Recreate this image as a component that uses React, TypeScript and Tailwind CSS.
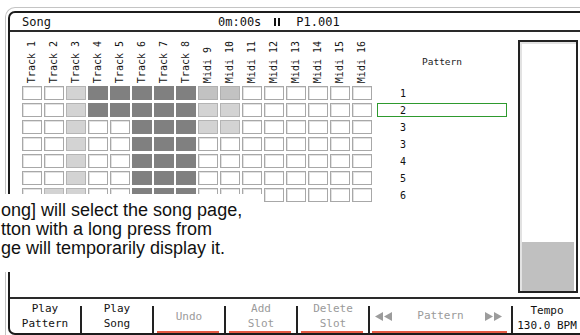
const tracks = [
  "Track 1", "Track 2", "Track 3", "Track 4", "Track 5", "Track 6", "Track 7", "Track 8",
  "Midi 9", "Midi 10", "Midi 11", "Midi 12", "Midi 13", "Midi 14", "Midi 15", "Midi 16",
]

// . empty, L light, M mid, D dark
const grid = [
  "..LDDDDDMM......",
  "..LDDDDDLL......",
  "..L..DDDLL......",
  "..L..DDD........",
  "..L..DDD........",
  "..L..DDD........",
  ".LL..DDD........",
]

const patterns = ["1", "2", "3", "3", "4", "5", "6"]

const mono = { fontFamily: '"DejaVu Sans Mono", monospace' }

function Cell({ kind }: { kind: string }) {
  if (kind === "D") return <div className="w-[20px] h-[14px] bg-[#808080]" />
  if (kind === "L") return <div className="w-[20px] h-[14px] bg-[#d3d3d3] border border-[#b4b4b4]" />
  if (kind === "M") return <div className="w-[20px] h-[14px] bg-[#c2c2c2] border border-[#b0b0b0]" />
  return <div className="w-[20px] h-[14px] bg-white border border-[#a8a8a8] shadow-[inset_1px_1px_0_#e2e2e2]" />
}

function Btn({ top, bottom, off, line, w }: { top?: string; bottom?: string; off?: boolean; line?: boolean; w: string }) {
  return (
    <div className={`${w} relative flex flex-col items-center justify-center leading-[15px] text-[11px] ${off ? "text-[#9a9a9a]" : "text-[#111]"}`}>
      {top && <span>{top}</span>}
      {bottom && <span>{bottom}</span>}
      {line && <div className="absolute left-[3px] right-[5px] bottom-0 h-[2px] bg-[#e35a43]" />}
    </div>
  )
}

function Sep() {
  return <div className="w-[2px] h-[27px] self-end bg-[#222]" />
}

function Arrows({ dir }: { dir: "l" | "r" }) {
  const pts = dir === "l" ? ["8,0 8,9 0,4.5", "17,0 17,9 9,4.5"] : ["0,0 0,9 8,4.5", "9,0 9,9 17,4.5"]
  return (
    <svg width="17" height="9" viewBox="0 0 17 9">
      {pts.map((p) => (
        <polygon key={p} points={p} fill="#9c9c9c" />
      ))}
    </svg>
  )
}

export default function App() {
  return (
    <div className="relative w-[580px] h-[335px] bg-white overflow-hidden" style={mono}>
      <div className="ml-[5px] mt-[7px] w-[620px] h-[340px] border-l border-t border-[#c4c4c4] rounded-tl-[10px] pl-[2px] pt-[3px]">
        <div className="w-[610px] h-[324px] border-2 border-[#1c1c1c] rounded-[7px] flex flex-col">
          {/* title bar */}
          <div className="h-[19px] border-b-2 border-[#2a2a2a] flex items-center pl-[12px] text-[12px] text-[#111]">
            <span className="w-[196px]">Song</span>
            <span>0m:00s</span>
            <span className="ml-[13px] flex gap-[2px]">
              <span className="w-[2px] h-[8px] bg-[#111]" />
              <span className="w-[2px] h-[8px] bg-[#111]" />
            </span>
            <span className="ml-[16px]">P1.001</span>
          </div>

          {/* body */}
          <div className="h-[265px] flex">
            <div className="pl-[12px] flex flex-col gap-[3px]">
              <div className="h-[51px] flex gap-[2px] items-end">
                {tracks.map((t) => (
                  <div key={t} className="w-[20px] flex justify-center">
                    <span className="[writing-mode:vertical-rl] rotate-180 text-[10px] leading-[10px] text-[#111]">{t}</span>
                  </div>
                ))}
              </div>
              {grid.map((r, i) => (
                <div key={i} className="flex gap-[2px]">
                  {r.split("").map((k, j) => (
                    <Cell key={j} kind={k} />
                  ))}
                </div>
              ))}
            </div>

            <div className="ml-[5px] w-[130px] flex flex-col gap-[3px]">
              <div className="h-[51px] pt-[9px] flex items-center justify-center text-[9.5px] text-[#222]">Pattern</div>
              {patterns.map((p, i) => (
                <div
                  key={i}
                  className={`h-[14px] pl-[22px] flex items-center text-[10px] text-[#111] border ${i === 1 ? "border-[#2e9a2e]" : "border-transparent"}`}
                >
                  {p}
                </div>
              ))}
            </div>

            <div className="ml-[11px] mt-[8px] w-[60px] h-[253px] border-2 border-[#222] flex flex-col">
              <div className="flex-1 border-l-2 border-t-2 border-[#e2e2e2] flex flex-col justify-end pr-[2px]">
                <div className="h-[49px] bg-[#c0c0c0]" />
              </div>
            </div>
          </div>

          {/* bottom bar */}
          <div className="flex-1 border-t-2 border-[#2a2a2a] flex">
            <Btn w="w-[70px]" top="Play" bottom="Pattern" />
            <Sep />
            <Btn w="w-[70px]" top="Play" bottom="Song" />
            <Sep />
            <Btn w="w-[70px]" top="Undo" off line />
            <Sep />
            <Btn w="w-[70px]" top="Add" bottom="Slot" off line />
            <Sep />
            <Btn w="w-[70px]" top="Delete" bottom="Slot" off line />
            <Sep />
            <div className="w-[141px] relative flex items-center justify-between pl-[5px] pr-[9px] text-[11px] text-[#9a9a9a]">
              <Arrows dir="l" />
              <span className="ml-[4px]">Pattern</span>
              <Arrows dir="r" />
              <div className="absolute left-[2px] right-[4px] bottom-0 h-[2px] bg-[#e35a43]" />
            </div>
            <Sep />
            <div className="w-[68px] flex flex-col items-center justify-center pt-[3px] leading-[15px] text-[11px] text-[#111]">
              <span>Tempo</span>
              <span>130.0 BPM</span>
            </div>
          </div>
        </div>
      </div>

      {/* overlaid manual text */}
      <div
        className="absolute left-0 top-[194px] w-[262px] h-[78px] bg-white pl-[1px] pt-[7px] text-[18px] leading-[19px] text-[#111] whitespace-pre"
        style={{ fontFamily: '"Liberation Sans", Arial, sans-serif' }}
      >
        <div>ong] will select the song page,</div>
        <div>tton with a long press from</div>
        <div>ge will temporarily display it.</div>
      </div>
    </div>
  )
}
